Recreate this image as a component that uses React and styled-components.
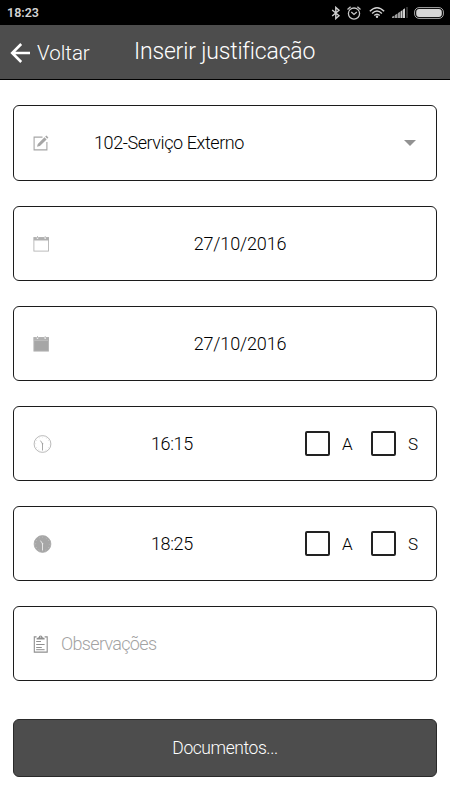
/* eslint-disable react/prop-types */
import styled, { createGlobalStyle } from "styled-components";

const BluetoothIcon = () => (
  <svg width="10" height="14" viewBox="0 0 10 14" fill="none" stroke="#cfcfcf" strokeWidth="1.4">
    <path d="M1.2 4 8 9.8 4.8 12.6V1.4L8 4.2 1.2 10" />
  </svg>
);

const AlarmIcon = () => (
  <svg width="14" height="14" viewBox="0 0 14 14" fill="none" stroke="#c8c8c8" strokeWidth="1.3">
    <circle cx="7" cy="7.6" r="5.6" />
    <path d="M.5 3.4 3.6.8M13.5 3.4 10.4.8M4.3 6 7 8.4 9.8 6" />
  </svg>
);

const WifiIcon = () => (
  <svg width="16" height="13" viewBox="0 0 17 13" fill="none" stroke="#d2d2d2" strokeWidth="1.5">
    <path d="M.9 5.2Q8.5-2.4 16.1 5.2M3.3 7.6Q8.5 2.4 13.7 7.6M5.6 9.8Q8.5 6.8 11.4 9.8" />
    <circle cx="8.5" cy="11" r="1.3" fill="#d2d2d2" stroke="none" />
  </svg>
);

const SignalIcon = () => (
  <svg width="16" height="11" viewBox="0 0 16 11">
    <path d="M0 11V9.8L2.5 8.4V11zM3 11V8L5.5 6.4V11zM6 11V6L8 4.8V11z" fill="#9c9c9c" />
    <path d="M8.5 11V4.4L10.5 3V11zM11 11V2.6L13 1.2V11z" fill="#d0d0d0" />
    <path d="M14 0h2v11h-2z" fill="#303030" />
  </svg>
);

const BatteryIcon = () => (
  <svg width="30" height="12" viewBox="0 0 30 12">
    <rect x=".6" y=".6" width="28.8" height="10.8" rx="4.4" fill="none" stroke="#a8a8a8" />
    <rect x="2.2" y="2.1" width="25.6" height="7.8" rx="3" fill="#d6d6d6" />
  </svg>
);

const BackIcon = () => (
  <svg width="21" height="20" viewBox="0 0 21 20" fill="none" stroke="#fff" strokeWidth="2.6">
    <path d="M11.2 1 2.2 10l9 9M2.2 10H20" />
  </svg>
);

const EditIcon = () => (
  <svg width="16" height="16" viewBox="0 0 16 16" fill="none" stroke="#a6a6a6">
    <path d="M9.5 2.1H1.1v12.8h12.8V7" strokeWidth="1.1" />
    <path d="M4 11.8 4.8 9 11.5 2.3l2.1 2.1-6.7 6.7zM12.2 1.6 13.4.5l2 2-1.2 1.3z" fill="#a6a6a6" stroke="none" />
  </svg>
);

const CalendarIcon = ({ filled }) => (
  <svg width="16" height="16" viewBox="0 0 16 16">
    <rect x=".9" y="1.5" width="14.6" height="13.6" fill={filled ? "#a6a6a6" : "#fff"} stroke="#b4b4b4" strokeWidth=".9" />
    <path d="M.8 1.4H16v3.2H.8z" fill="#b0b0b0" />
    <path d="M3.8.8h1.4v2H3.8zM11.5.8h1.4v2h-1.4z" fill="#fff" />
    <path d="M4.5 0v2M12.2 0v2" stroke="#a6a6a6" strokeWidth=".7" />
    <path d="M1.3 4.6h13.8" stroke={filled ? "#c4c4c4" : "#dedede"} strokeWidth=".7" />
  </svg>
);

const ClockIcon = ({ filled }) => {
  const line = filled ? "#ededed" : "#9e9e9e";
  return (
    <svg width="19" height="18" viewBox="-.5 0 19 18" fill="none">
      <circle cx="9" cy="9" r="8.4" fill={filled ? "#a6a6a6" : "#fff"} stroke="#a8a8a8" strokeWidth=".8" />
      <circle
        cx="9"
        cy="9"
        r="6.9"
        stroke={filled ? "#d8d8d8" : "#c4c4c4"}
        strokeWidth="1"
        strokeDasharray=".5 3.11"
        strokeDashoffset=".25"
      />
      <path d="M9 15.4V8.6L6.9 5.6" stroke={line} strokeWidth=".9" />
      <circle cx="9" cy="8.7" r=".8" fill={line} />
    </svg>
  );
};

const ClipboardIcon = () => (
  <svg width="15" height="18" viewBox="0 0 15 18" fill="none" stroke="#8f8f8f">
    <path d="M3.6 1.9H1.3v15.2h12.9V1.9h-2.6" strokeWidth="1.1" />
    <path d="M3.6 4.4V3.2L5.7 2.3a1.9 1.9 0 0 1 3.8 0l2.1.9v1.2z" fill="#8f8f8f" stroke="none" />
    <circle cx="7.6" cy="2" r=".6" fill="#fff" stroke="none" />
    <path d="M3.2 6.5h4.8M3.2 9.5h8.4M3.2 12.5h5.6M3.2 14.7h8.4" />
  </svg>
);

const Check = ({ label }) => (
  <CheckLabel>
    <CheckBox type="checkbox" />
    <CheckText>{label}</CheckText>
  </CheckLabel>
);

const TimeField = ({ time, filled }) => (
  <Field>
    <IconSlot>
      <ClockIcon filled={filled} />
    </IconSlot>
    <Time>{time}</Time>
    <Checks>
      <Check label="A" />
      <Check label="S" />
    </Checks>
  </Field>
);

const DateField = ({ date, filled }) => (
  <Field>
    <IconSlot>
      <CalendarIcon filled={filled} />
    </IconSlot>
    <DateText>{date}</DateText>
  </Field>
);

const App = () => (
  <Screen>
    <GlobalStyle />
    <StatusBar>
      <StatusTime>18:23</StatusTime>
      <StatusIcons>
        <BluetoothIcon />
        <AlarmIcon />
        <WifiIcon />
        <SignalIcon />
        <BatteryIcon />
      </StatusIcons>
    </StatusBar>
    <Header>
      <Back>
        <BackIcon />
        <BackText>Voltar</BackText>
      </Back>
      <Title>Inserir justificação</Title>
    </Header>
    <Form>
      <Field $tall>
        <IconSlot>
          <EditIcon />
        </IconSlot>
        <Selected>102-Serviço Externo</Selected>
        <Caret />
      </Field>
      <DateField date="27/10/2016" />
      <DateField date="27/10/2016" filled />
      <TimeField time="16:15" />
      <TimeField time="18:25" filled />
      <Field>
        <IconSlot>
          <ClipboardIcon />
        </IconSlot>
        <Placeholder>Observações</Placeholder>
      </Field>
      <Documents>Documentos...</Documents>
    </Form>
  </Screen>
);

export default App;

const GlobalStyle = createGlobalStyle`
  * {
    box-sizing: border-box;
  }

  body {
    margin: 0;
    background-color: #fff;
    font-family: Roboto, "Liberation Sans", sans-serif;
    font-weight: 300;
  }

  svg {
    display: block;
    flex-shrink: 0;
  }
`;

const Screen = styled.main`
  width: 450px;
  height: 800px;
  overflow: hidden;
`;

const StatusBar = styled.div`
  height: 25px;
  padding: 0 6px 0 7px;
  background-color: #000;
  display: flex;
  align-items: center;
  justify-content: space-between;
`;

const StatusTime = styled.span`
  color: #d2d2d2;
  font-size: 12.5px;
  font-weight: 600;
  line-height: 25px;
`;

const StatusIcons = styled.div`
  display: flex;
  align-items: center;
  gap: 6px;

  svg:nth-child(2) {
    margin-right: 2px;
  }

  svg:nth-child(3) {
    margin-right: 1px;
  }
`;

const Header = styled.header`
  height: 55px;
  padding-left: 10px;
  background-color: #4d4d4d;
  border-bottom: 1px solid #000;
  display: flex;
  align-items: center;
  color: #fff;
`;

const Back = styled.div`
  width: 124px;
  padding-top: 1px;
  display: flex;
  align-items: center;
  gap: 6px;
`;

const BackText = styled.span`
  font-size: 20.5px;
  line-height: 24px;
`;

const Title = styled.h1`
  margin: 0;
  font-size: 23px;
  font-weight: 300;
  letter-spacing: -0.18px;
  line-height: 28px;
  white-space: nowrap;
`;

const Form = styled.form`
  padding: 25px 13px 0;
  display: flex;
  flex-direction: column;
  gap: 25px;
`;

const Field = styled.div`
  height: ${({ $tall }) => ($tall ? "76px" : "75px")};
  padding: 0 19px;
  border: 1px solid #1c1c1c;
  border-radius: 6px;
  display: flex;
  align-items: center;
  color: #000;
  font-size: 18px;
  line-height: 24px;
`;

const IconSlot = styled.div`
  width: 28px;
  flex-shrink: 0;
`;

const Selected = styled.span`
  flex: 1;
  padding-left: 33px;
  letter-spacing: -0.42px;
`;

const Caret = styled.span`
  margin-right: 1px;
  border: 6.5px solid transparent;
  border-top-color: #929292;
  border-bottom: 0;
`;

const DateText = styled.span`
  flex: 1;
  padding-left: 2px;
  letter-spacing: -0.15px;
  text-align: center;
`;

const Time = styled.span`
  flex: 1;
  padding-left: 90px;
  letter-spacing: -0.4px;
`;

const Checks = styled.div`
  display: flex;
  gap: 20px;
`;

const CheckLabel = styled.label`
  display: flex;
  align-items: center;
  gap: 12px;
`;

const CheckBox = styled.input`
  appearance: none;
  width: 25px;
  height: 25px;
  margin: 0;
  border: 2px solid #222;
  border-radius: 2px;
`;

const CheckText = styled.span`
  width: 9px;
  font-size: 17px;
`;

const Placeholder = styled.span`
  color: #a3a3a3;
  letter-spacing: -0.68px;
`;

const Documents = styled.button`
  height: 58px;
  margin-top: 13px;
  padding: 0;
  border: 1px solid #2a2a2a;
  border-radius: 6px;
  background-color: #4d4d4d;
  color: #fff;
  font: inherit;
  font-size: 17.5px;
  letter-spacing: -0.42px;
`;
